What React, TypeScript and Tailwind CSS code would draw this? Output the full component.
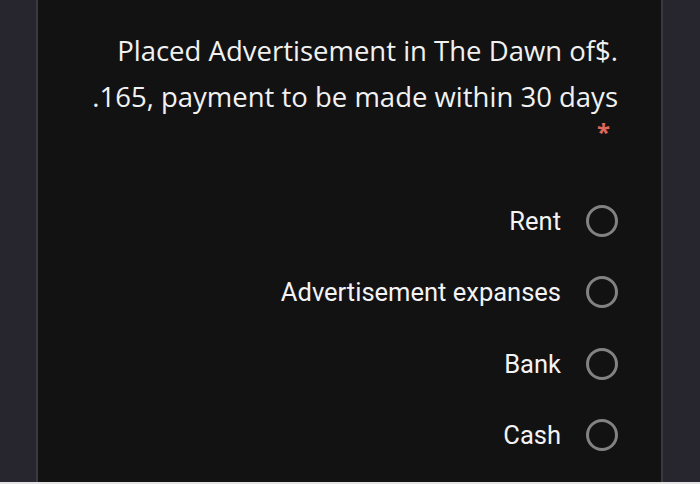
const options = ["Rent", "Advertisement expanses", "Bank", "Cash"];

export default function App() {
	return (
		<div className="h-[484px] w-[700px] bg-[#27252d] flex flex-col overflow-hidden">
			<div className="flex-1 flex">
				<div className="ml-[36px] w-[627px] border-x-2 border-[#3a3940] bg-[#121213] pr-[43px] flex flex-col items-end">
					<div
						className="mt-[28px] text-right text-[27.5px] leading-[46px] text-[#f1f1f1]"
						style={{ fontFamily: '"Open Sans", sans-serif' }}
					>
						<div>Placed Advertisement in The Dawn of$.</div>
						<div>.165, payment to be made within 30 days</div>
					</div>
					<div className="mt-[1px] mr-[8px] text-[24px] leading-[22px] font-bold text-[#e0675a]">*</div>
					<div className="mt-[42px] flex flex-col items-end">
						{options.map((o) => (
							<div key={o} className="h-[71.5px] flex items-center gap-[25px]">
								<span
									className="text-[25.5px] text-[#f3f3f3]"
									style={{ fontFamily: "Roboto, sans-serif" }}
								>
									{o}
								</span>
								<span className="w-[32px] h-[32px] rounded-full border-[3px] border-[#828282]" />
							</div>
						))}
					</div>
				</div>
			</div>
			<div className="h-[2px] bg-[#e4e4e4]" />
		</div>
	);
}
